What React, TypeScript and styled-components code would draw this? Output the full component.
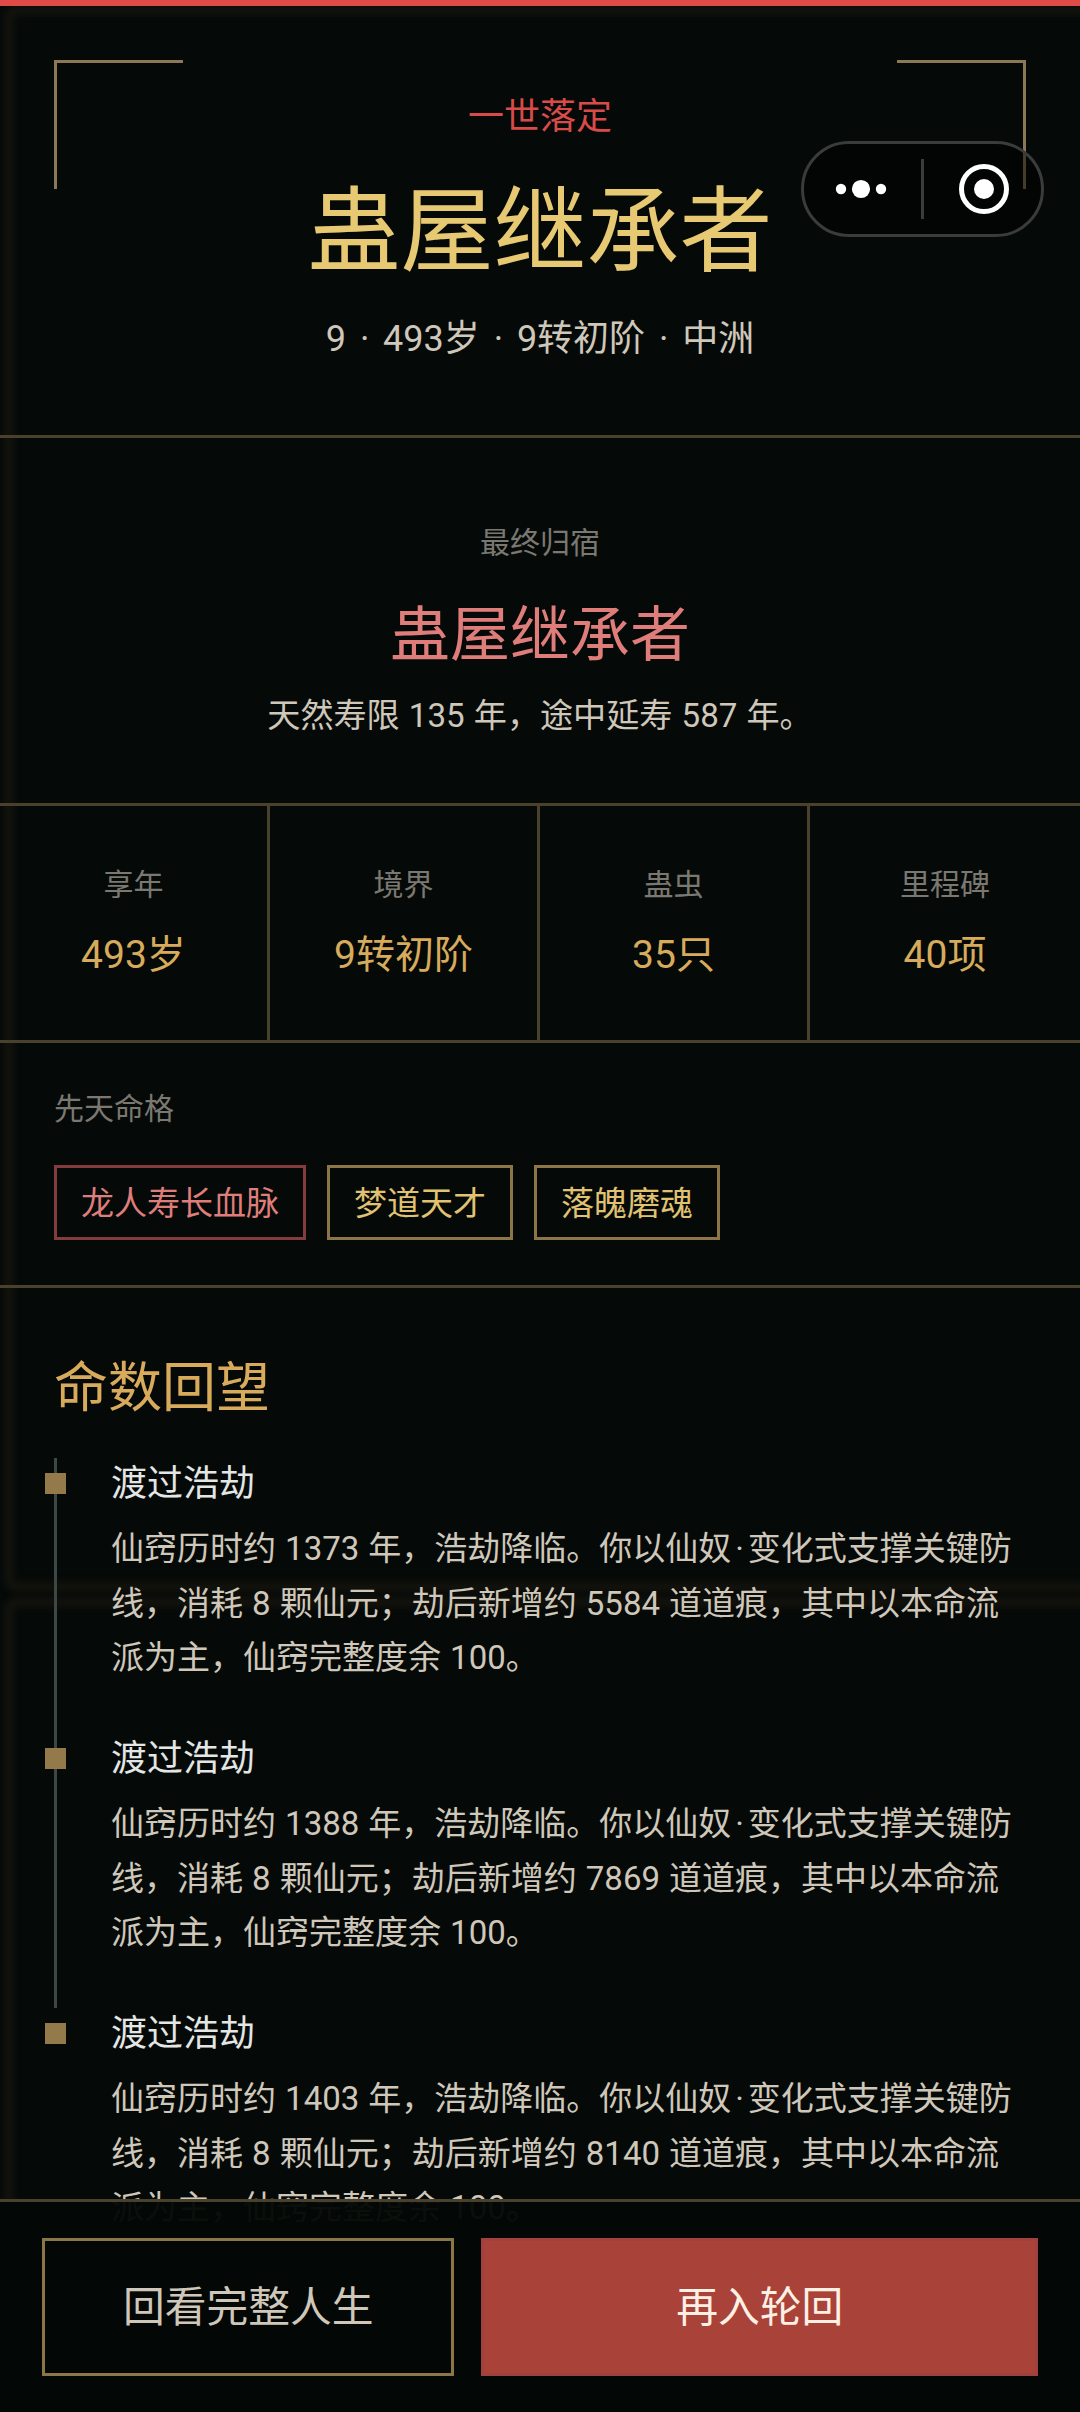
import React from "react";
import styled, { createGlobalStyle, css } from "styled-components";

const c = {
  bg: "#050a08",
  rule: "#4a412c",
  gold: "#d8ab5c",
  goldBright: "#e7c873",
  goldDim: "#8c7648",
  text: "#cfc7ba",
  muted: "#7b7871",
  red: "#d94b48",
  pink: "#de7d7a",
};

const GlobalStyle = createGlobalStyle`
  * { box-sizing: border-box; }
  body {
    margin: 0;
    background: ${c.bg};
    font-family: "Noto Sans CJK SC", "Noto Sans", sans-serif;
  }
  h1, h2, h3, p { margin: 0; font-weight: 400; }
`;

/* Latin digits from Roboto, ideographs from Noto Sans CJK */
const mixedText = css`
  font-family: Roboto, "Noto Sans CJK SC", sans-serif;
`;

const Page = styled.main`
  position: relative;
  width: 1080px;
  height: 2412px;
  overflow: hidden;
  isolation: isolate;
  background: ${c.bg};
`;

const Backdrop = styled.div`
  position: absolute;
  inset: 0;
  z-index: -1;
  overflow: hidden;
`;

const Frame = styled.div<{ $top: number; $height: number }>`
  position: absolute;
  top: ${(p) => p.$top}px;
  left: 4px;
  width: 1120px;
  height: ${(p) => p.$height}px;
  border: 10px solid #13120d;
  border-radius: 14px;
  filter: blur(3px);
`;

const Header = styled.header`
  position: relative;
  border-top: 6px solid #e04b47;
  border-bottom: 3px solid ${c.rule};
  padding: 82px 54px 71px;
  text-align: center;
`;

const Corner = styled.span<{ $side: "left" | "right" }>`
  position: absolute;
  top: 54px;
  ${(p) => p.$side}: 54px;
  width: 129px;
  height: 129px;
  border-top: 3px solid #8d7855;
  border-${(p) => p.$side}: 3px solid #8d7855;
`;

const Eyebrow = styled.p`
  font-size: 36px;
  line-height: 51px;
  color: ${c.red};
`;

const Title = styled.h1`
  margin-top: 24px;
  font-size: 93px;
  line-height: 121px;
  color: ${c.goldBright};
`;

const Subtitle = styled.p`
  ${mixedText}
  margin-top: 30px;
  font-size: 36px;
  line-height: 50px;
  word-spacing: 0.6px;
  color: ${c.text};
`;

const Dot = styled.span`
  display: inline-block;
  width: 0.5em;
  text-align: center;
`;

const Capsule = styled.div`
  position: absolute;
  z-index: 3;
  top: 141px;
  right: 36px;
  width: 243px;
  height: 96px;
  display: grid;
  grid-template-columns: 1fr 3px 1fr;
  align-items: center;
  justify-items: center;
  border: 3px solid #3a3b3b;
  border-radius: 48px;
  background: rgba(0, 0, 0, 0.5);
`;

const CapsuleDivider = styled.span`
  width: 3px;
  height: 60px;
  background: #3a3b3b;
`;

const MoreIcon = styled.svg`
  margin-right: 3px;
`;

const CloseIcon = styled.svg`
  margin-left: 3px;
`;

const Fate = styled.section`
  padding: 81px 54px 61px;
  border-bottom: 3px solid ${c.rule};
  text-align: center;
`;

const Label = styled.p`
  font-size: 30px;
  line-height: 42px;
  color: ${c.muted};
`;

const FateTitle = styled.h2`
  margin-top: 29px;
  font-size: 60px;
  line-height: 80px;
  color: ${c.pink};
`;

const FateNote = styled.p`
  ${mixedText}
  margin-top: 20px;
  font-size: 33.12px;
  line-height: 52px;
  word-spacing: 0.9px;
  color: ${c.text};
`;

const Stats = styled.section`
  display: grid;
  grid-template-columns: repeat(4, 1fr);
  border-bottom: 3px solid ${c.rule};
`;

const Stat = styled.div`
  padding: 55px 0 58px;
  text-align: center;
  border-right: 3px solid ${c.rule};
  &:last-child { border-right: 0; }
`;

const StatValue = styled.p`
  ${mixedText}
  margin-top: 25px;
  font-size: 39px;
  line-height: 54px;
  color: ${c.gold};
`;

const Traits = styled.section`
  padding: 42px 54px 45px;
  border-bottom: 3px solid ${c.rule};
`;

const TraitList = styled.div`
  display: flex;
  gap: 21px;
  margin-top: 38px;
`;

const Trait = styled.span<{ $rare?: boolean }>`
  height: 75px;
  padding: 0 24px;
  border: 3px solid ${(p) => (p.$rare ? "#853c3c" : c.goldDim)};
  font-size: 33px;
  line-height: 67px;
  color: ${(p) => (p.$rare ? c.pink : "#e0c272")};
`;

const Chronicle = styled.section`
  padding: 58px 54px 0;
`;

const ChronicleTitle = styled.h2`
  font-size: 54px;
  line-height: 76px;
  color: ${c.gold};
`;

const Timeline = styled.div`
  display: flex;
  flex-direction: column;
  margin-top: 36px;
`;

const Entry = styled.article`
  position: relative;
  height: 275px;
  padding-left: 54px;
  border-left: 3px solid #3d4744;
  &:last-child { border-left-color: transparent; }
  &::before {
    content: "";
    position: absolute;
    left: -12px;
    top: 15px;
    width: 21px;
    height: 21px;
    background: #94794b;
  }
`;

const EntryTitle = styled.h3`
  font-size: 36px;
  line-height: 45px;
  color: #e3e6e4;
`;

const EntryBody = styled.p`
  ${mixedText}
  margin-top: 19px;
  font-size: 33px;
  line-height: 54.65px;
  word-spacing: 0.9px;
  color: ${c.text};
`;

const Footer = styled.footer`
  position: absolute;
  z-index: 2;
  left: 0;
  right: 0;
  bottom: 0;
  display: grid;
  grid-template-columns: 1fr 1.35fr;
  gap: 27px;
  padding: 36px 42px;
  border-top: 3px solid ${c.rule};
  background: rgba(3, 7, 5, 0.96);
`;

const Action = styled.button<{ $primary?: boolean }>`
  height: 138px;
  padding: 0 0 7px;
  border: 3px solid ${(p) => (p.$primary ? "#a0413d" : c.goldDim)};
  background: ${(p) => (p.$primary ? "#a94239" : "transparent")};
  color: ${(p) => (p.$primary ? "#fff0e4" : c.text)};
  font-family: inherit;
  font-size: 41.76px;
`;

const summary = ["9", "493岁", "9转初阶", "中洲"];

const stats = [
  ["享年", "493岁"],
  ["境界", "9转初阶"],
  ["蛊虫", "35只"],
  ["里程碑", "40项"],
];

const traits = [
  { name: "龙人寿长血脉", rare: true },
  { name: "梦道天才" },
  { name: "落魄磨魂" },
];

const entries = [
  { year: 1373, marks: 5584 },
  { year: 1388, marks: 7869 },
  { year: 1403, marks: 8140 },
];

export default function App() {
  return (
    <>
      <GlobalStyle />
      <Page>
        <Backdrop>
          <Frame $top={5} $height={1587} />
          <Frame $top={1597} $height={1585} />
        </Backdrop>

        <Header>
          <Corner $side="left" />
          <Corner $side="right" />
          <Eyebrow>一世落定</Eyebrow>
          <Title>蛊屋继承者</Title>
          <Subtitle>
            {summary.map((part, i) => (
              <React.Fragment key={part}>
                {i > 0 && <> <Dot>·</Dot> </>}
                {part}
              </React.Fragment>
            ))}
          </Subtitle>
        </Header>

        <Capsule>
          <MoreIcon width="52" height="20" viewBox="0 0 52 20" fill="#fff">
            <circle cx="6" cy="10" r="5.2" />
            <circle cx="26" cy="10" r="9.1" />
            <circle cx="46" cy="10" r="5.2" />
          </MoreIcon>
          <CapsuleDivider />
          <CloseIcon width="50" height="50" viewBox="0 0 50 50">
            <circle cx="25" cy="25" r="22.5" fill="none" stroke="#fff" strokeWidth="5" />
            <circle cx="25" cy="25" r="10" fill="#fff" />
          </CloseIcon>
        </Capsule>

        <Fate>
          <Label>最终归宿</Label>
          <FateTitle>蛊屋继承者</FateTitle>
          <FateNote>天然寿限 135 年，途中延寿 587 年。</FateNote>
        </Fate>

        <Stats>
          {stats.map(([label, value]) => (
            <Stat key={label}>
              <Label>{label}</Label>
              <StatValue>{value}</StatValue>
            </Stat>
          ))}
        </Stats>

        <Traits>
          <Label>先天命格</Label>
          <TraitList>
            {traits.map((t) => (
              <Trait key={t.name} $rare={t.rare}>{t.name}</Trait>
            ))}
          </TraitList>
        </Traits>

        <Chronicle>
          <ChronicleTitle>命数回望</ChronicleTitle>
          <Timeline>
            {entries.map((e) => (
              <Entry key={e.year}>
                <EntryTitle>渡过浩劫</EntryTitle>
                <EntryBody>
                  {`仙窍历时约 ${e.year} 年，浩劫降临。你以仙奴`}
                  <Dot>·</Dot>
                  {`变化式支撑关键防线，消耗 8 颗仙元；劫后新增约 ${e.marks} 道道痕，其中以本命流派为主，仙窍完整度余 100。`}
                </EntryBody>
              </Entry>
            ))}
          </Timeline>
        </Chronicle>

        <Footer>
          <Action>回看完整人生</Action>
          <Action $primary>再入轮回</Action>
        </Footer>
      </Page>
    </>
  );
}
